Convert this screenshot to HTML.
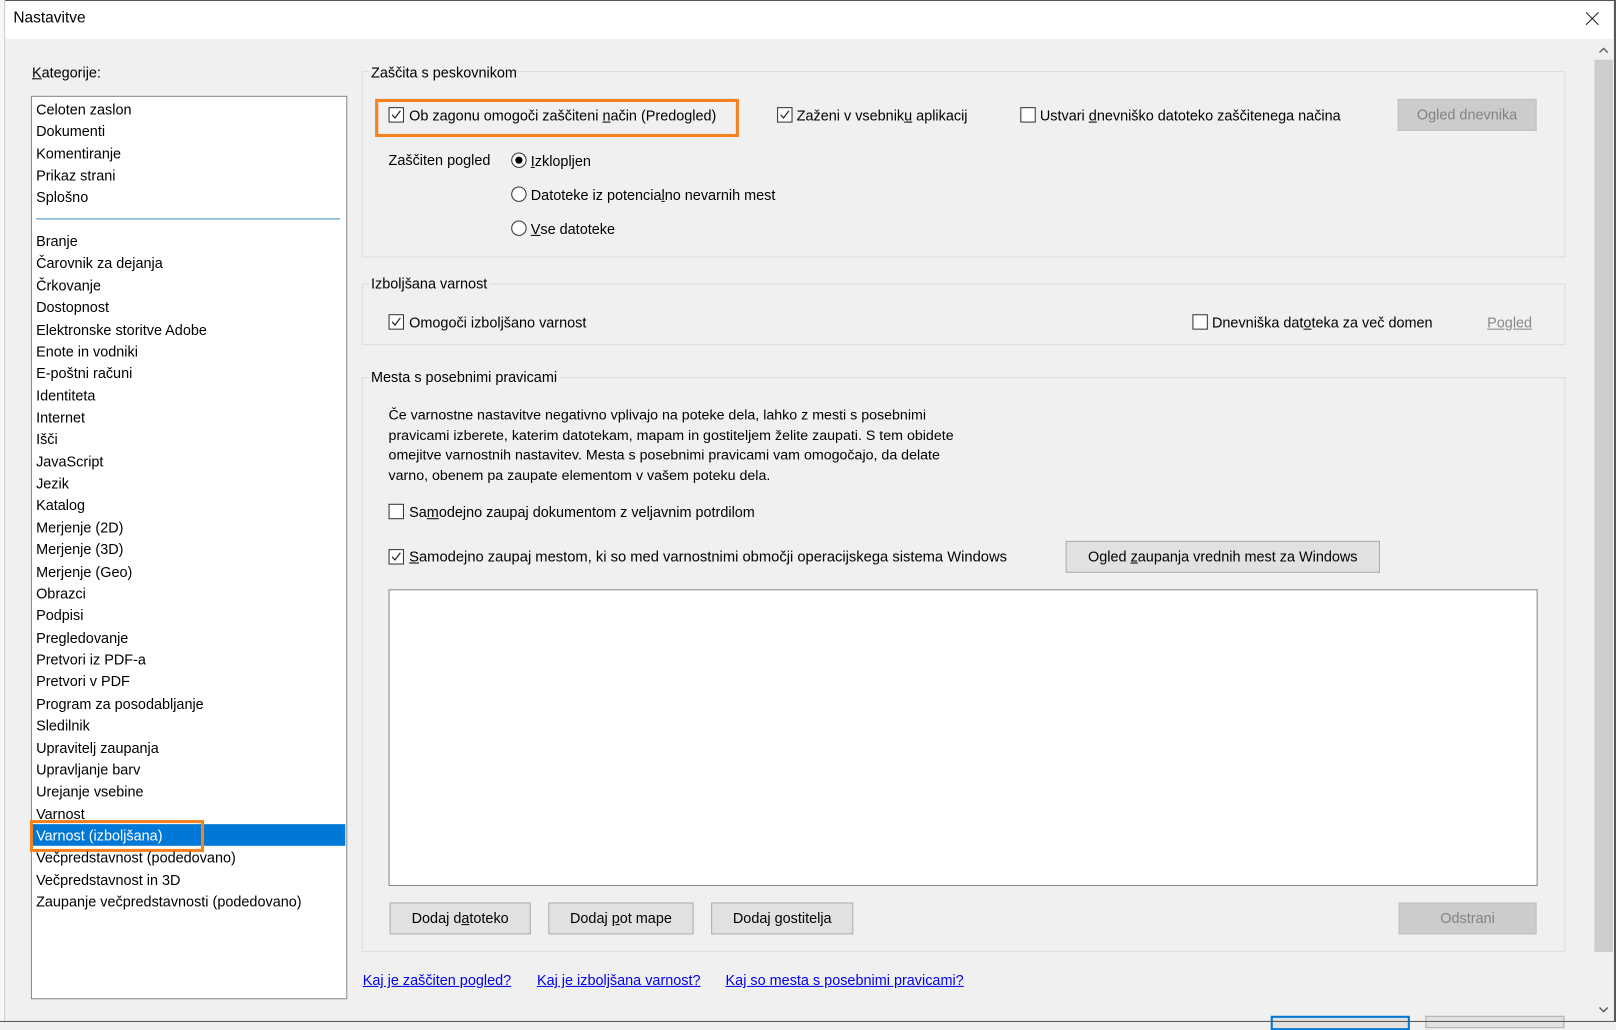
<!DOCTYPE html>
<html><head><meta charset="utf-8"><style>
html,body{margin:0;padding:0;width:1616px;height:1022px;overflow:hidden;background:#f0f0f0}
#w{position:absolute;left:0;top:0;width:1568px;height:992px;transform:scale(1.0306,1.0302);transform-origin:0 0;font-family:"Liberation Sans",sans-serif;font-size:14px;color:#000}
.a{position:absolute;white-space:nowrap;line-height:18px}
.cb{position:absolute;width:13px;height:13px;border:1px solid #333;background:#fff}
.cb svg{position:absolute;left:1px;top:1px}
.rd{position:absolute;width:13px;height:13px;border:1px solid #333;border-radius:50%;background:#fff}
.rd i{position:absolute;left:3px;top:3px;width:7px;height:7px;border-radius:50%;background:#000}
.grp{position:absolute;border:1px solid #dcdcdc}
.lbl{position:absolute;background:#f0f0f0;padding:0 2px;white-space:nowrap;line-height:18px}
.btn{position:absolute;background:#e1e1e1;border:1px solid #adadad;text-align:center;line-height:29px;box-sizing:border-box;height:31px}
.dis{background:#cccccc;border-color:#bfbfbf;color:#838383}
.lk{color:#0000ee;text-decoration:underline}
u{text-decoration:underline}
</style></head><body><div id="w">
<div style="position:absolute;left:0;top:0;width:1568px;height:38px;background:#fff;border-top:1px solid #555;box-sizing:border-box"></div>
<div style="position:absolute;left:0;top:0;width:4px;height:992px;background:#f7f7f7;border-right:1px solid #ccc"></div>
<div class="a" style="left:13px;top:9px;font-size:15px">Nastavitve</div>
<svg style="position:absolute;left:1538px;top:11px" width="14" height="14"><path d="M1 1 L13 13 M13 1 L1 13" stroke="#222" stroke-width="1"/></svg>
<div style="position:absolute;left:1566px;top:0;width:2px;height:992px;background:#555"></div>
<!-- scrollbar -->
<div style="position:absolute;left:1546px;top:38px;width:20px;height:952px;background:#f0f0f0"></div>
<svg style="position:absolute;left:1551px;top:45px" width="10" height="7"><path d="M1 6 L5 2 L9 6" stroke="#555" stroke-width="1.3" fill="none"/></svg>
<div style="position:absolute;left:1547px;top:58px;width:18px;height:866px;background:#cdcdcd"></div>
<svg style="position:absolute;left:1551px;top:977px" width="10" height="7"><path d="M1 1 L5 5 L9 1" stroke="#555" stroke-width="1.3" fill="none"/></svg>

<div class="a" style="left:31px;top:61px"><u>K</u>ategorije:</div>
<div style="position:absolute;left:30px;top:93px;width:305px;height:875px;background:#fff;border:1px solid #828790"></div>
<div style="position:absolute;left:35px;top:212px;width:295px;height:1px;background:#3b8fc4"></div>
<div style="position:absolute;left:31px;top:800px;width:304px;height:21px;background:#0078d7"></div>
<div style="position:absolute;left:29px;top:796px;width:163px;height:25px;border:3px solid #f58220"></div>

<!-- group 1 -->
<div class="grp" style="left:351px;top:69px;width:1166px;height:179px"></div>
<div class="lbl" style="left:358px;top:61px">Zaščita s peskovnikom</div>
<div style="position:absolute;left:364px;top:96px;width:347px;height:31px;border:3px solid #f58220"></div>
<div class="cb" style="left:377px;top:104px"><svg width="11" height="11"><path d="M1.5 5.5 L4.3 8.5 L9.5 1.5" stroke="#222" stroke-width="1.2" fill="none"/></svg></div>
<div class="a" style="left:397px;top:103px">Ob zagonu omogoči zaščiteni <u>n</u>ačin (Predogled)</div>
<div class="cb" style="left:754px;top:104px"><svg width="11" height="11"><path d="M1.5 5.5 L4.3 8.5 L9.5 1.5" stroke="#222" stroke-width="1.2" fill="none"/></svg></div>
<div class="a" style="left:773px;top:103px">Zaženi v vsebnik<u>u</u> aplikacij</div>
<div class="cb" style="left:990px;top:104px"></div>
<div class="a" style="left:1009px;top:103px">Ustvari <u>d</u>nevniško datoteko zaščitenega načina</div>
<div class="btn dis" style="left:1356px;top:96px;width:135px">Ogled dnevnika</div>
<div class="a" style="left:377px;top:146px">Zaščiten pogled</div>
<div class="rd" style="left:496px;top:148px"><i></i></div>
<div class="a" style="left:515px;top:147px"><u>I</u>zklopljen</div>
<div class="rd" style="left:496px;top:181px"></div>
<div class="a" style="left:515px;top:180px">Datoteke iz potencia<u>l</u>no nevarnih mest</div>
<div class="rd" style="left:496px;top:214px"></div>
<div class="a" style="left:515px;top:213px"><u>V</u>se datoteke</div>

<!-- group 2 -->
<div class="grp" style="left:351px;top:275px;width:1166px;height:58px"></div>
<div class="lbl" style="left:358px;top:266px">Izboljšana varnost</div>
<div class="cb" style="left:377px;top:305px"><svg width="11" height="11"><path d="M1.5 5.5 L4.3 8.5 L9.5 1.5" stroke="#222" stroke-width="1.2" fill="none"/></svg></div>
<div class="a" style="left:397px;top:304px">Omogoči izboljšano varnost</div>
<div class="cb" style="left:1157px;top:305px"></div>
<div class="a" style="left:1176px;top:304px">Dnevniška dat<u>o</u>teka za več domen</div>
<div class="a" style="left:1443px;top:304px;color:#8a8a8a;text-decoration:underline">Pogled</div>

<!-- group 3 -->
<div class="grp" style="left:351px;top:366px;width:1166px;height:556px"></div>
<div class="lbl" style="left:358px;top:357px">Mesta s posebnimi pravicami</div>
<div class="a" style="left:377px;top:393px;line-height:19.6px;font-size:13.8px">Če varnostne nastavitve negativno vplivajo na poteke dela, lahko z mesti s posebnimi<br>pravicami izberete, katerim datotekam, mapam in gostiteljem želite zaupati. S tem obidete<br>omejitve varnostnih nastavitev. Mesta s posebnimi pravicami vam omogočajo, da delate<br>varno, obenem pa zaupate elementom v vašem poteku dela.</div>
<div class="cb" style="left:377px;top:489px"></div>
<div class="a" style="left:397px;top:488px">Sa<u>m</u>odejno zaupaj dokumentom z veljavnim potrdilom</div>
<div class="cb" style="left:377px;top:533px"><svg width="11" height="11"><path d="M1.5 5.5 L4.3 8.5 L9.5 1.5" stroke="#222" stroke-width="1.2" fill="none"/></svg></div>
<div class="a" style="left:397px;top:532px;font-size:14.3px"><u>S</u>amodejno zaupaj mestom, ki so med varnostnimi območji operacijskega sistema Windows</div>
<div class="btn" style="left:1034px;top:525px;width:305px">Ogled <u>z</u>aupanja vrednih mest za Windows</div>
<div style="position:absolute;left:377px;top:572px;width:1113px;height:286px;background:#fff;border:1px solid #828790"></div>
<div class="btn" style="left:378px;top:876px;width:137px">Dodaj d<u>a</u>toteko</div>
<div class="btn" style="left:532px;top:876px;width:141px">Dodaj <u>p</u>ot mape</div>
<div class="btn" style="left:690px;top:876px;width:138px">Dodaj <u>g</u>ostitelja</div>
<div class="btn dis" style="left:1357px;top:876px;width:134px">Odstrani</div>

<div class="a lk" style="left:352px;top:942px">Kaj je zaščiten pogled?</div>
<div class="a lk" style="left:521px;top:942px">Kaj je izboljšana varnost?</div>
<div class="a lk" style="left:704px;top:942px">Kaj so mesta s posebnimi pravicami?</div>

<div style="position:absolute;left:1233px;top:986px;width:131px;height:10px;border:2px solid #0078d7;background:#e1e1e1"></div>
<div style="position:absolute;left:1383px;top:986px;width:133px;height:10px;border:1px solid #adadad;background:#e1e1e1"></div>
<div style="position:absolute;left:0;top:991px;width:1568px;height:1px;background:#555"></div>

<div class="a" style="left:35px;top:97px">Celoten zaslon</div>
<div class="a" style="left:35px;top:118px">Dokumenti</div>
<div class="a" style="left:35px;top:140px">Komentiranje</div>
<div class="a" style="left:35px;top:161px">Prikaz strani</div>
<div class="a" style="left:35px;top:182px">Splošno</div>
<div class="a" style="left:35px;top:225px">Branje</div>
<div class="a" style="left:35px;top:246.4px">Čarovnik za dejanja</div>
<div class="a" style="left:35px;top:267.7px">Črkovanje</div>
<div class="a" style="left:35px;top:289.1px">Dostopnost</div>
<div class="a" style="left:35px;top:310.5px">Elektronske storitve Adobe</div>
<div class="a" style="left:35px;top:331.8px">Enote in vodniki</div>
<div class="a" style="left:35px;top:353.2px">E-poštni računi</div>
<div class="a" style="left:35px;top:374.6px">Identiteta</div>
<div class="a" style="left:35px;top:396px">Internet</div>
<div class="a" style="left:35px;top:417.3px">Išči</div>
<div class="a" style="left:35px;top:438.7px">JavaScript</div>
<div class="a" style="left:35px;top:460.1px">Jezik</div>
<div class="a" style="left:35px;top:481.4px">Katalog</div>
<div class="a" style="left:35px;top:502.8px">Merjenje (2D)</div>
<div class="a" style="left:35px;top:524.2px">Merjenje (3D)</div>
<div class="a" style="left:35px;top:545.5px">Merjenje (Geo)</div>
<div class="a" style="left:35px;top:566.9px">Obrazci</div>
<div class="a" style="left:35px;top:588.3px">Podpisi</div>
<div class="a" style="left:35px;top:609.6px">Pregledovanje</div>
<div class="a" style="left:35px;top:631px">Pretvori iz PDF-a</div>
<div class="a" style="left:35px;top:652.4px">Pretvori v PDF</div>
<div class="a" style="left:35px;top:673.7px">Program za posodabljanje</div>
<div class="a" style="left:35px;top:695.1px">Sledilnik</div>
<div class="a" style="left:35px;top:716.5px">Upravitelj zaupanja</div>
<div class="a" style="left:35px;top:737.8px">Upravljanje barv</div>
<div class="a" style="left:35px;top:759.2px">Urejanje vsebine</div>
<div class="a" style="left:35px;top:780.6px">Varnost</div>
<div class="a" style="left:35px;top:802px;color:#fff">Varnost (izboljšana)</div>
<div class="a" style="left:35px;top:823.3px">Večpredstavnost (podedovano)</div>
<div class="a" style="left:35px;top:844.7px">Večpredstavnost in 3D</div>
<div class="a" style="left:35px;top:866.1px">Zaupanje večpredstavnosti (podedovano)</div>
</div></body></html>
